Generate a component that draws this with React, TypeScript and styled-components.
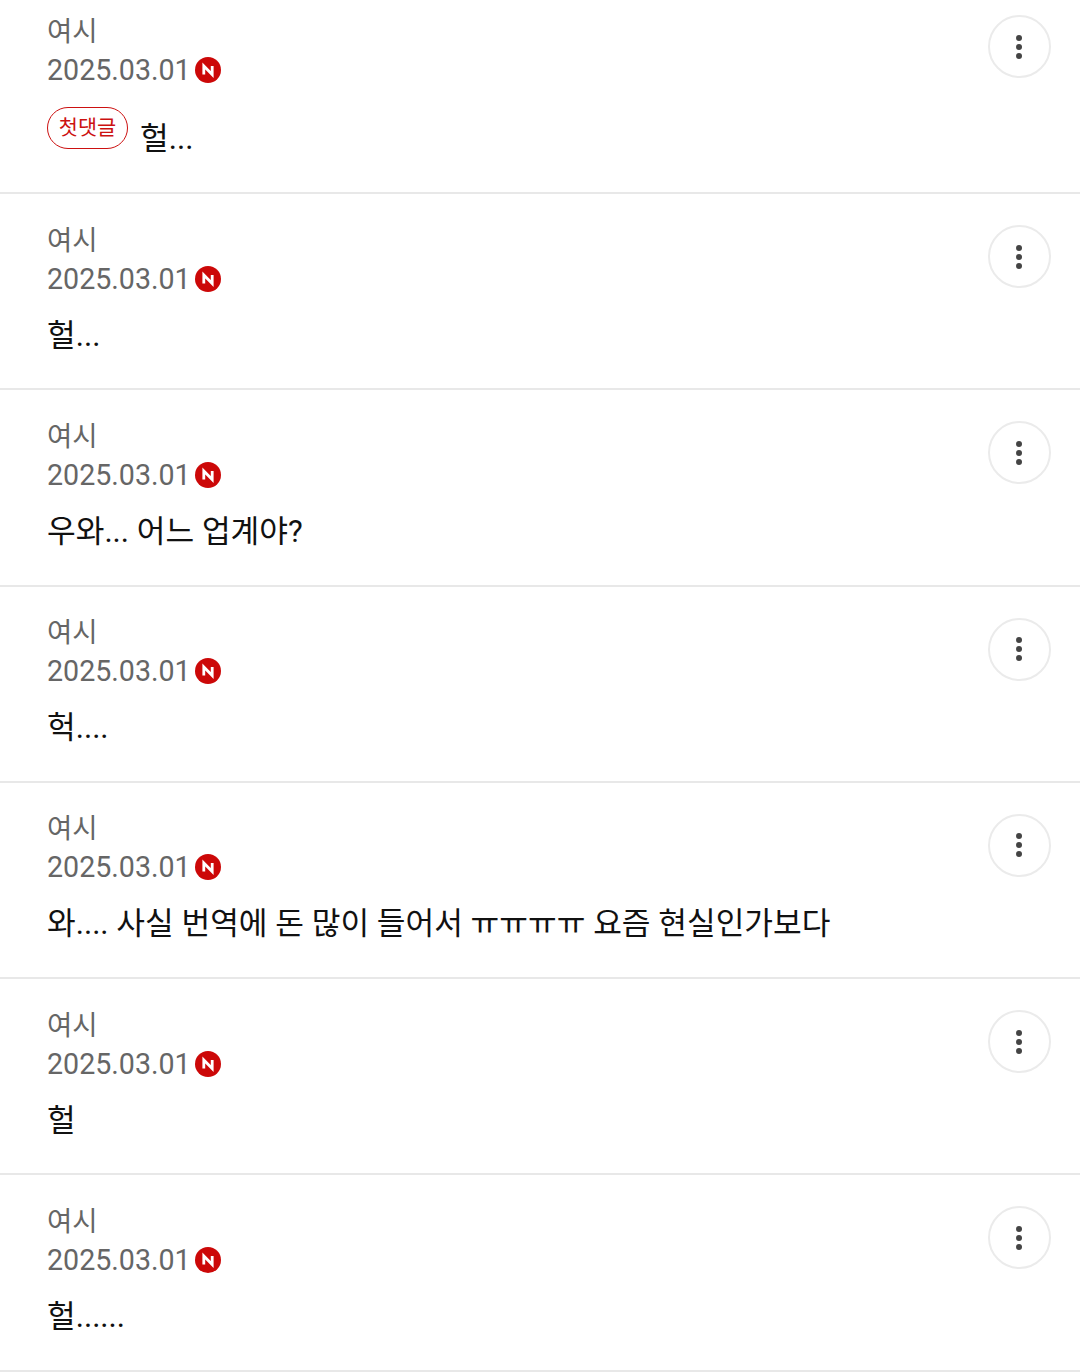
import React from 'react';
import styled, { createGlobalStyle } from 'styled-components';

const GlobalStyle = createGlobalStyle`
  html, body {
    margin: 0;
    padding: 0;
    background: #fff;
    overflow: hidden;
  }
  * { box-sizing: border-box; }
`;

const List = styled.div`
  width: 1080px;
  height: 1372px;
  overflow: hidden;
  font-family: Roboto, "Noto Sans CJK KR", sans-serif;
`;

const Row = styled.div<{ $first?: boolean }>`
  display: flex;
  justify-content: space-between;
  align-items: flex-start;
  height: ${p => (p.$first ? '194px' : '196.3px')};
  padding: ${p => (p.$first ? '14px' : '28.5px')} 29.5px 0 47px;
  border-bottom: 2.5px solid #e8e8e8;
`;

const Body = styled.div`
  display: flex;
  flex-direction: column;
`;

const Author = styled.div`
  height: 36px;
  font-size: 27.5px;
  line-height: 36px;
  color: #666;
`;

const Meta = styled.div`
  display: flex;
  align-items: center;
  gap: 4px;
  height: 40px;
  font-size: 28.6px;
  line-height: 40px;
  color: #666;
`;

const Content = styled.div<{ $first?: boolean }>`
  display: flex;
  align-items: flex-start;
  gap: 12px;
  margin-top: ${p => (p.$first ? '17px' : '15px')};
  font-size: 31.2px;
  line-height: 44px;
  color: #111;
  white-space: nowrap;
`;

const FirstBadge = styled.span`
  display: inline-flex;
  align-items: center;
  justify-content: center;
  width: 81px;
  height: 42px;
  border: 1.8px solid #cc1111;
  border-radius: 21px;
  font-size: 20.8px;
  color: #cc1111;
`;

const Text = styled.span<{ $first?: boolean }>`
  ${p => (p.$first ? 'margin-top: 10px;' : '')}
`;

const MoreButton = styled.button<{ $first?: boolean }>`
  display: flex;
  align-items: center;
  justify-content: center;
  flex: none;
  width: 63px;
  height: 63px;
  margin-top: ${p => (p.$first ? '1px' : '2.5px')};
  padding: 0;
  border: 2px solid #ebebeb;
  border-radius: 50%;
  background: #fff;
`;

const NewIcon = () => (
  <svg width="26" height="26" viewBox="0 0 26 26">
    <circle cx="13" cy="13" r="13" fill="#cc0808" />
    <path d="M8.8 17.5V9L17.2 17.5V9" fill="none" stroke="#fff" strokeWidth="2.8" />
  </svg>
);

const DotsIcon = () => (
  <svg width="8" height="26" viewBox="0 0 8 26">
    <circle cx="4" cy="4" r="3" fill="#444" />
    <circle cx="4" cy="13" r="3" fill="#444" />
    <circle cx="4" cy="22" r="3" fill="#444" />
  </svg>
);

const comments = [
  '헐...',
  '헐...',
  '우와... 어느 업계야?',
  '헉....',
  '와.... 사실 번역에 돈 많이 들어서 ㅠㅠㅠㅠ 요즘 현실인가보다',
  '헐',
  '헐......',
];

const App: React.FC = () => (
  <>
    <GlobalStyle />
    <List>
      {comments.map((text, i) => (
        <Row key={i} $first={i === 0}>
          <Body>
            <Author>여시</Author>
            <Meta>
              2025.03.01
              <NewIcon />
            </Meta>
            <Content $first={i === 0}>
              {i === 0 && <FirstBadge>첫댓글</FirstBadge>}
              <Text $first={i === 0}>{text}</Text>
            </Content>
          </Body>
          <MoreButton $first={i === 0}>
            <DotsIcon />
          </MoreButton>
        </Row>
      ))}
    </List>
  </>
);

export default App;
